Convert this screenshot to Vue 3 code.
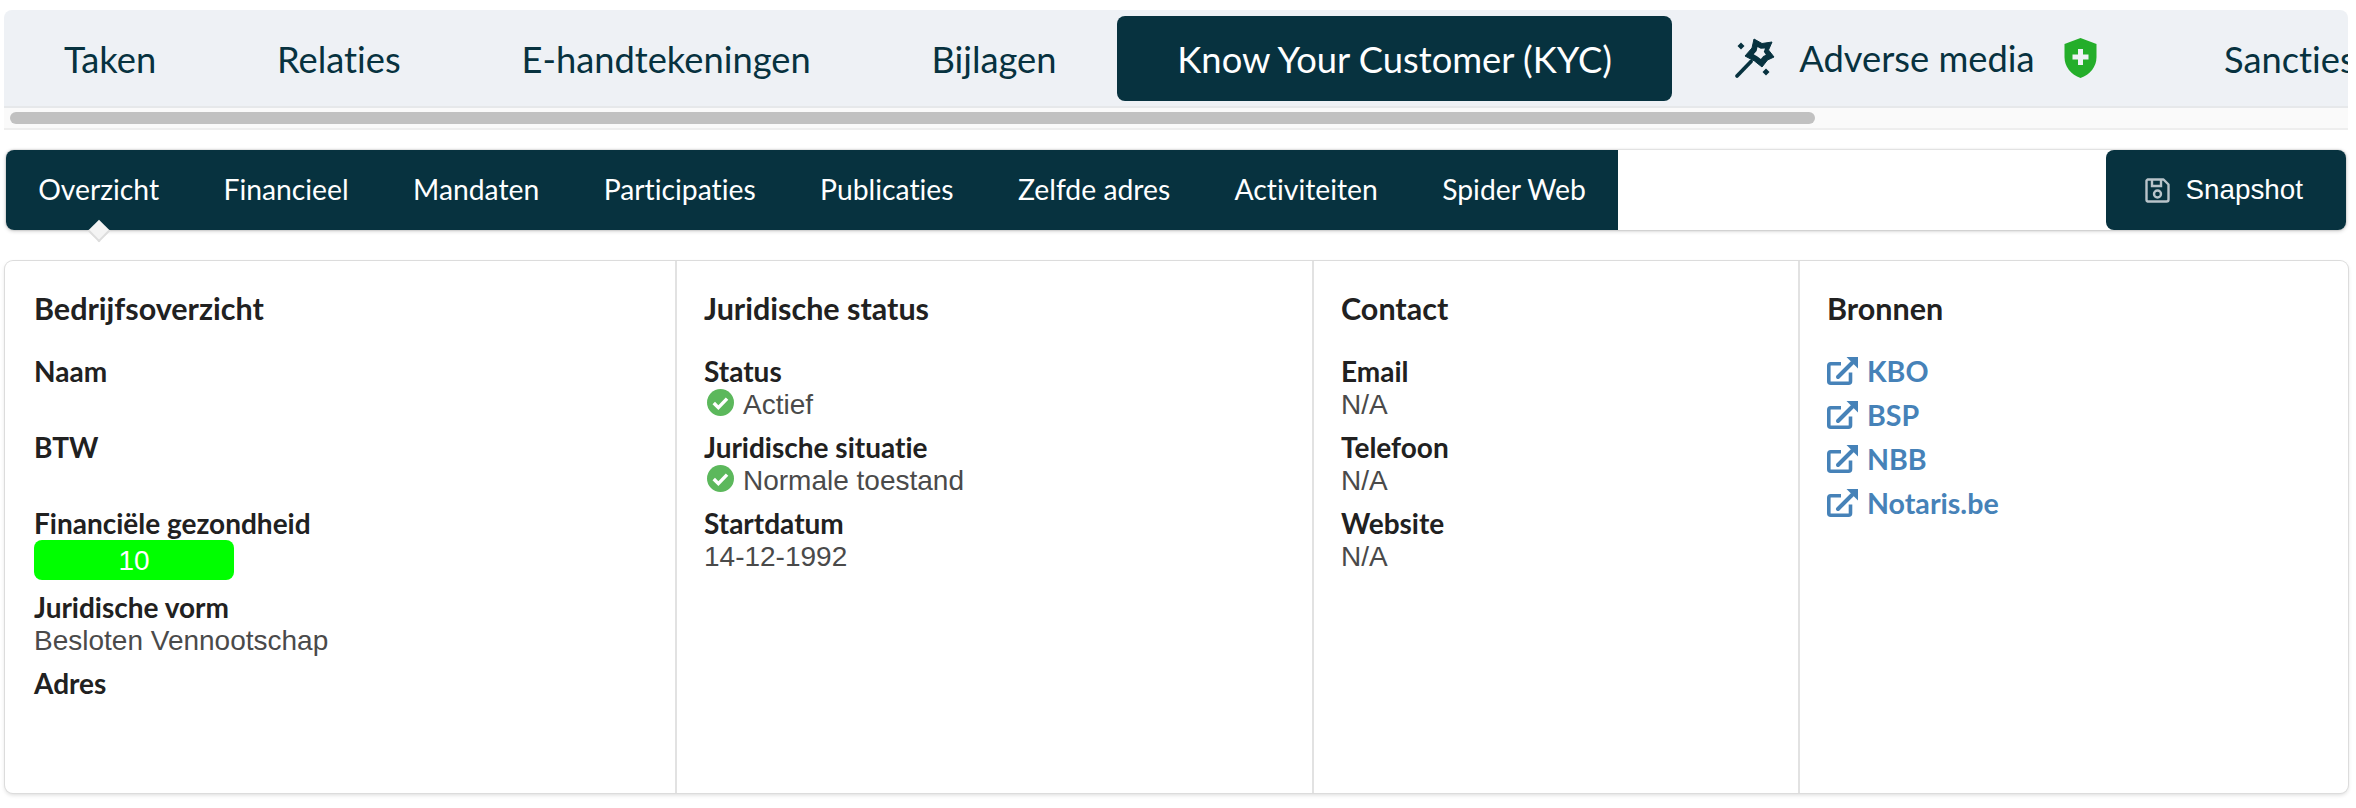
<script setup>
const tabs = ['Taken', 'Relaties', 'E-handtekeningen', 'Bijlagen']
const menu = ['Overzicht', 'Financieel', 'Mandaten', 'Participaties', 'Publicaties', 'Zelfde adres', 'Activiteiten', 'Spider Web']
const sources = ['KBO', 'BSP', 'NBB', 'Notaris.be']
</script>

<template>
  <div class="page">
    <div class="tabs-wrap">
      <div class="tabs">
        <div v-for="t in tabs" :key="t" class="tab">{{ t }}</div>
        <div class="tab active">Know Your Customer (KYC)</div>
        <div class="tab adverse">
          <svg class="wand" viewBox="0 0 50 48" width="50" height="48">
            <path d="M24 5L32 9.500 42 8 38.500 16 44 23 37.500 26 32 33 24.500 27 15 22 22 14z" fill="#07323f" stroke="#07323f" stroke-width="1"/>
            <path d="M27.500 13L30.800 14.800 35 14.400 33.800 17.700 35.900 20.700 33.400 21.900 30.800 24.900 27.500 22.400 23.700 20.300 26.600 16.900z" fill="#eef1f5"/>
            <path d="M7 42L21 27.500" stroke="#07323f" stroke-width="3.800" stroke-linecap="round"/>
            <path d="M11 8.500L14.500 12 11 15.500 7.500 12zM36 34.500L39.500 38 36 41.500 32.500 38z" fill="#07323f"/>
          </svg>
          <span>Adverse media</span>
          <svg class="shield" viewBox="0 0 33 40" width="33" height="40">
            <path d="M16.500 0L32.500 6V19C32.500 29 26 36.500 16.500 40 7 36.500 .5 29 .5 19V6z" fill="#24ae2a"/>
            <path d="M14 11h5v5.500h5.500v5H19V27h-5v-5.500H8.500v-5H14z" fill="#eef1f5"/>
          </svg>
        </div>
        <div class="tab">Sancties</div>
      </div>
      <div class="scrollbar"><div class="thumb"></div></div>
    </div>

    <div class="menu">
      <div class="menu-left">
        <div v-for="(m, i) in menu" :key="m" class="menu-item" :class="{ current: i === 0 }">{{ m }}</div>
      </div>
      <div class="snapshot">
        <svg viewBox="0 0 25 25" width="25" height="25" fill="none" stroke="#b9c4ca" stroke-width="2.400">
          <path d="M2.500 1.500h16l5 5v15a2 2 0 0 1-2 2h-19a2 2 0 0 1-1-1.500v-19.500z" stroke-linejoin="round"/>
          <path d="M7 2v6h9V2"/>
          <circle cx="12.500" cy="16" r="3.500"/>
        </svg>
        <span>Snapshot</span>
      </div>
    </div>

    <div class="panel">
      <section class="col col1">
        <h3>Bedrijfsoverzicht</h3>
        <div class="field"><div class="label">Naam</div><div class="value"></div></div>
        <div class="field"><div class="label">BTW</div><div class="value"></div></div>
        <div class="field">
          <div class="label">Financiële gezondheid</div>
          <div class="badge">10</div>
        </div>
        <div class="field"><div class="label">Juridische vorm</div><div class="value">Besloten Vennootschap</div></div>
        <div class="field"><div class="label">Adres</div></div>
      </section>
      <section class="col col2">
        <h3>Juridische status</h3>
        <div class="field">
          <div class="label">Status</div>
          <div class="value ok">
            <svg viewBox="0 0 28 28" width="27" height="27"><circle cx="14" cy="14" r="14" fill="#5cb85c"/><path d="M7 14.500l4.800 4.800 9-9.300" fill="none" stroke="#fff" stroke-width="3.600"/></svg>
            <span>Actief</span>
          </div>
        </div>
        <div class="field">
          <div class="label">Juridische situatie</div>
          <div class="value ok">
            <svg viewBox="0 0 28 28" width="27" height="27"><circle cx="14" cy="14" r="14" fill="#5cb85c"/><path d="M7 14.500l4.800 4.800 9-9.300" fill="none" stroke="#fff" stroke-width="3.600"/></svg>
            <span>Normale toestand</span>
          </div>
        </div>
        <div class="field"><div class="label">Startdatum</div><div class="value">14-12-1992</div></div>
      </section>
      <section class="col col3">
        <h3>Contact</h3>
        <div class="field"><div class="label">Email</div><div class="value">N/A</div></div>
        <div class="field"><div class="label">Telefoon</div><div class="value">N/A</div></div>
        <div class="field"><div class="label">Website</div><div class="value">N/A</div></div>
      </section>
      <section class="col col4">
        <h3>Bronnen</h3>
        <div class="links">
          <a v-for="s in sources" :key="s" class="link">
            <svg viewBox="0 0 31 28" width="31" height="28">
              <path d="M14 6.800H3.800A2 2 0 0 0 1.800 8.800V24.200a2 2 0 0 0 2 2H21.500a2 2 0 0 0 2-2V15.500" fill="none" stroke="#4682b8" stroke-width="3.600"/>
              <path d="M11 20L25 6" stroke="#4682b8" stroke-width="4" stroke-linecap="round"/>
              <path d="M19.500 0H31V11.500z" fill="#4682b8"/>
            </svg>
            <span>{{ s }}</span>
          </a>
        </div>
      </section>
    </div>
  </div>
</template>

<style scoped>
.page {
  width: 2356px;
  height: 808px;
  overflow: hidden;
  background: #fff;
  font-family: "Lato", sans-serif;
  font-variant-ligatures: none;
  padding: 10px 8px 0 4px;
  box-sizing: border-box;
}
.tabs-wrap {
  border-bottom: 2px solid #eeeeee;
  margin-bottom: 20px;
}
.tabs {
  display: flex;
  align-items: center;
  height: 98px;
  overflow: hidden;
  background: #eef1f5;
  border-radius: 8px 8px 0 0;
  border-bottom: 2px solid #e6e8ea;
  box-sizing: border-box;
  color: #07323f;
  font-size: 36.3px;
}
.tab {
  flex: none;
  padding: 2px 60.4px 0;
  height: 85px;
  display: flex;
  align-items: center;
  white-space: nowrap;
  box-sizing: border-box;
  border-radius: 8px;
}
.tab:first-child {
  padding-left: 60px;
}
.tab.active {
  background: #07323f;
  color: #fff;
}
.adverse {
  padding: 0 67px 0 58px;
}
.wand { margin-right: 19px; }
.shield { margin-left: 29px; }
.scrollbar {
  height: 20px;
  background: #fafafa;
  padding: 4px 6px;
  box-sizing: border-box;
}
.thumb {
  width: 1805px;
  height: 12px;
  background: #c1c1c1;
  border-radius: 6px;
}
.menu {
  margin-left: 2px;
  margin-right: 2px;
  height: 80px;
  display: flex;
  justify-content: space-between;
  background: #fff;
  border-radius: 8px;
  box-shadow: 0 0 2px rgba(0, 0, 0, 0.25), 0 1px 4px rgba(0, 0, 0, 0.2);
  margin-bottom: 31px;
}
.menu-left {
  display: flex;
  background: #07323f;
  border-radius: 8px 0 0 8px;
}
.menu-item {
  position: relative;
  display: flex;
  align-items: center;
  padding: 0 32.2px 2px;
  color: #fff;
  font-size: 28.3px;
  white-space: nowrap;
}
.menu-item.current::after {
  content: "";
  position: absolute;
  left: 50%;
  bottom: -9px;
  width: 16px;
  height: 16px;
  margin-left: -8px;
  background: #f4f4f4;
  border-right: 2px solid #ddd;
  border-bottom: 2px solid #ddd;
  box-sizing: border-box;
  transform: rotate(45deg);
}
.snapshot {
  display: flex;
  align-items: center;
  gap: 16px;
  padding: 0 43px 0 39px;
  background: #07323f;
  border-radius: 8px;
  color: #fff;
  font-family: "Liberation Sans", sans-serif;
  font-size: 27.8px;
}
.panel {
  margin-left: 1px;
  height: 532px;
  display: grid;
  grid-template-columns: 670px 637px 486px 1fr;
  border-radius: 8px;
  box-shadow: 0 0 0 1px #dcdcdc, 0 2px 4px rgba(0, 0, 0, 0.15);
  background: #fff;
}
.col {
  padding: 26px 0 0 27px;
  border-left: 2px solid #e2e2e2;
  box-sizing: border-box;
  min-width: 0;
}
.col1 { border-left: 0; padding-left: 29px; }
h3 {
  margin: 0 0 26px;
  font-size: 30.5px;
  line-height: 42px;
  font-weight: 700;
  color: #212121;
}
.field {
  margin-bottom: 12px;
}
.label {
  font-size: 28px;
  line-height: 32px;
  font-weight: 700;
  color: #212121;
}
.value {
  font-family: "Liberation Sans", sans-serif;
  font-size: 28px;
  line-height: 32px;
  min-height: 32px;
  padding-top: 2px;
  margin-bottom: -2px;
  color: #4a4a4a;
}
.ok {
  display: flex;
  align-items: flex-start;
  gap: 9px;
}
.ok svg { margin-left: 3px; }
.badge {
  width: 200px;
  height: 40px;
  margin-top: 1px;
  margin-bottom: -1px;
  line-height: 42px;
  text-align: center;
  background: #00ff00;
  border-radius: 8px;
  color: #fff;
  font-family: "Liberation Sans", sans-serif;
  font-size: 28px;
}
.links {
  display: flex;
  flex-direction: column;
  gap: 12px;
}
.link {
  display: flex;
  align-items: center;
  gap: 9px;
  height: 32px;
  font-size: 28.6px;
  font-weight: 700;
  color: #4682b8;
}
</style>

<style>
html, body { margin: 0; background: #fff; }
</style>
